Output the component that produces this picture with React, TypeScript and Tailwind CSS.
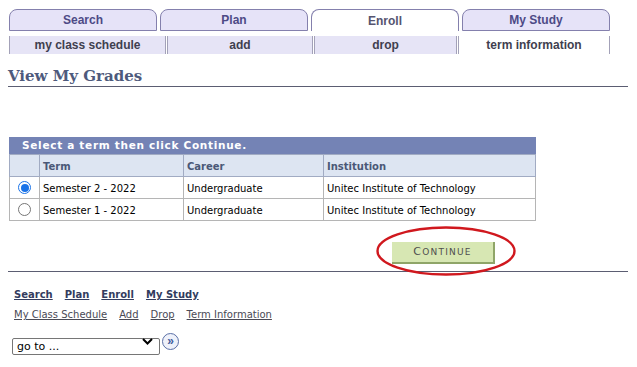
import React from 'react';

const tabs = [
  { label: 'Search', active: false },
  { label: 'Plan', active: false },
  { label: 'Enroll', active: true },
  { label: 'My Study', active: false },
];

const subTabs = [
  { label: 'my class schedule', w: 'w-[157px]', active: false },
  { label: 'add', w: 'w-[146px]', active: false },
  { label: 'drop', w: 'w-[143px]', active: false },
  { label: 'term information', w: 'w-[152px]', active: true },
];

const rows = [
  { term: 'Semester 2 - 2022', career: 'Undergraduate', inst: 'Unitec Institute of Technology', selected: true },
  { term: 'Semester 1 - 2022', career: 'Undergraduate', inst: 'Unitec Institute of Technology', selected: false },
];

const verdana = { fontFamily: '"DejaVu Sans", Verdana, sans-serif' };

export default function App() {
  return (
    <div className="w-[637px] h-[367px] bg-white overflow-hidden" style={{ fontFamily: '"Liberation Sans", Arial, sans-serif' }}>
      {/* Top tabs */}
      <div className="flex gap-[3px] pl-[9px] pt-[9px]">
        {tabs.map((t) => (
          <div
            key={t.label}
            className={
              t.active
                ? 'w-[148px] h-[22px] rounded-t-[8px] border border-b-0 border-[#8480ad] bg-white flex items-center justify-center text-[12px] font-bold text-[#55546f]'
                : 'w-[148px] h-[22px] rounded-t-[8px] border border-[#8480ad] bg-[#e6e3f8] flex items-center justify-center text-[12px] font-bold text-[#4d4a86]'
            }
          >
            {t.label}
          </div>
        ))}
      </div>

      {/* Sub tabs */}
      <div className="flex gap-[1px] pl-[9px] mt-[5px]">
        {subTabs.map((s) => (
          <div
            key={s.label}
            className={
              (s.active ? 'bg-white ' : 'bg-[#e6e4f6] ') +
              s.w +
              ' h-[18px] border-x border-[#a3a1b8] flex items-center justify-center text-[12px] font-bold text-[#3f3f4f]'
            }
          >
            {s.label}
          </div>
        ))}
      </div>

      {/* Heading */}
      <div className="ml-[8px] mt-[13px] w-[620px] border-b border-[#5b5d72] pb-[1px]">
        <h1
          className="text-[15px] font-bold leading-[18px] text-[#4e5a7c]"
          style={{ fontFamily: '"DejaVu Serif", Georgia, serif' }}
        >
          View My Grades
        </h1>
      </div>

      {/* Term table */}
      <div className="ml-[9px] mt-[50px] w-[527px]" style={verdana}>
        <div className="h-[17px] bg-[#7483b5] flex items-center pl-[13px] text-[10.5px] font-bold text-white tracking-[0.7px]">
          Select a term then click Continue.
        </div>
        <table className="w-full border-collapse text-[10px]">
          <thead>
            <tr className="h-[22px] bg-[#dde5f2] text-left text-[#4a5877]">
              <th className="w-[30px] border border-[#a1abc3]"></th>
              <th className="w-[144px] border border-[#a1abc3] pl-[3px] pt-[2px] font-bold">Term</th>
              <th className="w-[140px] border border-[#a1abc3] pl-[3px] pt-[2px] font-bold">Career</th>
              <th className="border border-[#a1abc3] pl-[3px] pt-[2px] font-bold">Institution</th>
            </tr>
          </thead>
          <tbody>
            {rows.map((r) => (
              <tr key={r.term} className="h-[22px] text-black">
                <td className="border border-[#b5b5b5]">
                  <div className="flex justify-center">
                    {r.selected ? (
                      <div className="w-[13px] h-[13px] rounded-full border-[1.5px] border-[#1a73e8] flex items-center justify-center">
                        <div className="w-[8px] h-[8px] rounded-full bg-[#1a73e8]" />
                      </div>
                    ) : (
                      <div className="w-[13px] h-[13px] rounded-full border border-[#767676]" />
                    )}
                  </div>
                </td>
                <td className="border border-[#b5b5b5] pl-[3px] pt-[1px]">{r.term}</td>
                <td className="border border-[#b5b5b5] pl-[3px] pt-[1px]">{r.career}</td>
                <td className="border border-[#b5b5b5] pl-[3px] pt-[1px]">{r.inst}</td>
              </tr>
            ))}
          </tbody>
        </table>
      </div>

      {/* Continue */}
      <div className="relative mt-[17px] h-[22px] ml-[392px] w-[103px]">
        <button
          className="w-[103px] h-[22px] bg-[#d7e7b3] border-r-2 border-b-2 border-[#8fa568] text-[#4f4f4f] text-[11px] tracking-[1.2px]"
          style={verdana}
        >
          C<span className="text-[9px]">ONTINUE</span>
        </button>
        <svg className="absolute left-[-17px] top-[-13px]" width="142" height="52" viewBox="0 0 142 52">
          <ellipse cx="71" cy="26" rx="68.5" ry="23.5" fill="none" stroke="#d0181e" strokeWidth="2.4" />
        </svg>
      </div>

      {/* Divider */}
      <div className="ml-[8px] mt-[11px] w-[620px] border-t border-[#5b5d72]" />

      {/* Footer links */}
      <div className="ml-[14px] mt-[15px] flex gap-[12px] text-[10px] font-bold text-[#333c5e] underline" style={verdana}>
        <span>Search</span>
        <span>Plan</span>
        <span>Enroll</span>
        <span>My Study</span>
      </div>
      <div className="ml-[14px] mt-[5px] flex gap-[12px] text-[10px] text-[#4a4a55] underline" style={verdana}>
        <span>My Class Schedule</span>
        <span>Add</span>
        <span>Drop</span>
        <span>Term Information</span>
      </div>

      {/* go to */}
      <div className="ml-[12px] mt-[11px] flex items-center gap-[2px]">
        <div className="relative w-[148px] h-[17px]">
          <select
            className="appearance-none w-full h-full border border-[#767676] rounded-[2px] bg-white pl-[4px] text-[11px] text-black outline-none"
            style={verdana}
          >
            <option>go to ...</option>
          </select>
          <svg className="absolute right-[7px] top-[5px] pointer-events-none" width="11" height="7" viewBox="0 0 11 7">
            <path d="M1 1l4.5 4.5L10 1" fill="none" stroke="#000" strokeWidth="2" />
          </svg>
        </div>
        <div className="w-[17px] h-[17px] rounded-full border border-[#5a6fa6] bg-[#eef1fa] flex items-center justify-center text-[12px] leading-none text-[#3f5a9a] font-bold pb-[1px]">
          »
        </div>
      </div>
    </div>
  );
}
